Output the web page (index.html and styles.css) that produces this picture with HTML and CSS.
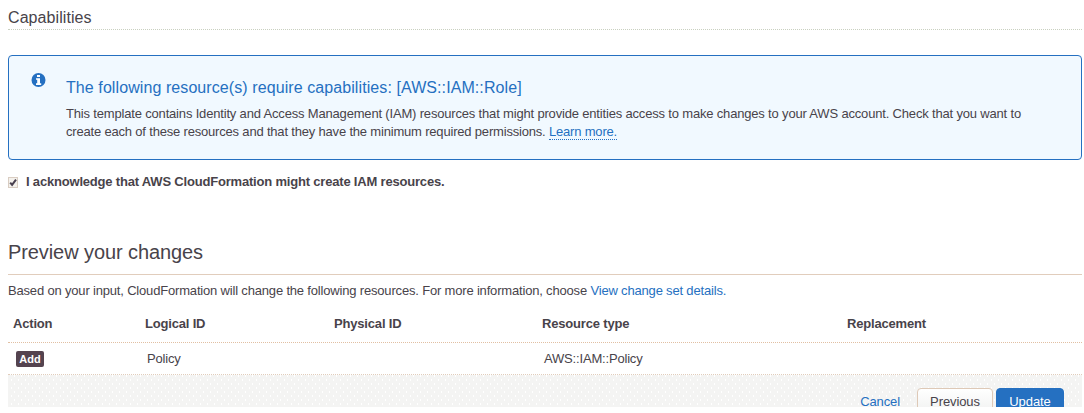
FILE: index.html
```html
<!DOCTYPE html>
<html lang="en">
<head>
<meta charset="utf-8">
<title>Update stack</title>
<link rel="stylesheet" href="styles.css">
</head>
<body>
<main class="page">
  <h2 class="section-title"><span>Capabilities</span></h2>
  <section class="notice">
    <svg class="notice-icon" width="15" height="15" viewBox="0 0 15 15"><circle cx="7.5" cy="7" r="7" fill="#2570c1"/><path d="M6 2h3v2H6zM5 5.2h4v5h1.2v1.7H5v-1.7h1.2V6.8H5z" fill="#fff"/></svg>
    <div class="notice-body">
      <h3 class="notice-title">The following resource(s) require capabilities: [AWS::IAM::Role]</h3>
      <p class="notice-text"><span class="line-a">This template contains Identity and Access Management (IAM) resources that might provide entities access to make changes to your AWS account. Check that you want to</span><br><span class="line-b">create each of these resources and that they have the minimum required permissions. <a class="learn" href="#">Learn more.</a></span></p>
    </div>
  </section>
  <label class="ack">
    <svg class="check" width="10" height="11" viewBox="0 0 10 11"><rect x=".5" y=".5" width="9" height="10" fill="#f4f1ec" stroke="#d9cdc2"/><path d="M2.2 5.6l1.9 2.3L8 2.6" fill="none" stroke="#4a4150" stroke-width="2"/></svg>
    <span class="ack-text">I acknowledge that AWS CloudFormation might create IAM resources.</span>
  </label>
  <h1 class="preview-title"><span>Preview your changes</span></h1>
  <p class="intro"><span>Based on your input, CloudFormation will change the following resources. For more information, choose <a href="#">View change set details.</a></span></p>
  <div class="row head">
    <span>Action</span><span>Logical ID</span><span>Physical ID</span><span>Resource type</span><span>Replacement</span>
  </div>
  <div class="row data">
    <span><b class="badge">Add</b></span><span>Policy</span><span></span><span class="type">AWS::IAM::Policy</span><span></span>
  </div>
  <footer class="footer">
    <a class="cancel" href="#">Cancel</a>
    <span class="btn">Previous</span>
    <span class="btn primary">Update</span>
  </footer>
</main>
</body>
</html>
```
FILE: styles.css
```css
* { box-sizing: border-box; }
body { margin: 0; background: #fff; color: #48434a; font: 13px/18px "Liberation Sans", Arial, sans-serif; overflow: hidden; }
.page { width: 1082px; height: 407px; padding-left: 8px; overflow: hidden; white-space: nowrap; }
h1, h2, h3, p { margin: 0; font-weight: normal; }
a { color: #2570c1; text-decoration: none; }
.section-title { height: 30px; padding-top: 8px; font-size: 16px; line-height: 20px; letter-spacing: .08px; border-bottom: 1px dotted #c9d0c0; }
.notice { display: flex; height: 105px; margin-top: 25px; padding: 17px 0 0 22px; background: #f1f9ff; border: 1px solid #2570c1; border-radius: 4px; }
.notice-icon { flex: none; }
.notice-body { margin-left: 20px; padding-top: 4px; }
.notice-title { color: #2570c1; font-size: 16px; line-height: 22px; letter-spacing: .085px; }
.notice-text { margin-top: 6px; }
.line-a { letter-spacing: -.175px; }
.line-b { letter-spacing: -.186px; }
.learn { border-bottom: 1px dotted #2570c1; }
.ack { display: flex; align-items: center; gap: 8px; height: 18px; margin-top: 13px; font-weight: bold; letter-spacing: -.19px; }
.preview-title { height: 84px; padding-top: 48px; font-size: 20px; line-height: 26px; letter-spacing: -.09px; border-bottom: 1px solid #e1cdbc; }
.intro { margin-top: 7px; letter-spacing: -.177px; }
.row { display: grid; grid-template-columns: 132px 189px 208px 305px 1fr; padding-left: 5px; letter-spacing: -.18px; }
.head { height: 43px; padding-top: 15px; font-weight: bold; border-bottom: 1px dotted #e1bfa2; }
.data { height: 32px; padding: 7px 0 0 7px; border-bottom: 1px dotted #e1cdbc; }
.badge { display: block; width: 28px; height: 16px; margin: 1px 0 0 1px; border-radius: 2px; background: #54434f; color: #fff; font-size: 11px; line-height: 16px; text-align: center; letter-spacing: 0; }
.footer { display: flex; justify-content: flex-end; align-items: flex-start; height: 32px; padding: 13px 18px 0 0; letter-spacing: -.1px; background-color: #f4f4f3; background-image: radial-gradient(circle, #fff 0 .7px, transparent .8px), radial-gradient(circle, #fff 0 .7px, transparent .8px); background-size: 7px 8px, 7px 8px; background-position: 0 1px, 3px 5px; }
.cancel { margin-right: 17px; line-height: 27px; }
.btn { width: 76px; height: 30px; border: 1px solid #dec9b7; border-radius: 4px; background: linear-gradient(#fff, #eeefee); text-align: center; line-height: 25px; }
.primary { width: 68px; margin-left: 3px; background: #2570c1; border-color: #2570c1; color: #fff; }
```
